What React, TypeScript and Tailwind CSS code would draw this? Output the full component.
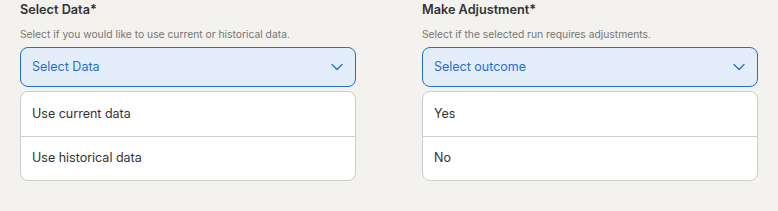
import React from "react";

function Chevron() {
  return (
    <svg width="14" height="14" viewBox="0 0 14 14" fill="none">
      <path d="M2 4.5 L7 9.5 L12 4.5" stroke="#1f6fd1" strokeWidth="1.3" strokeLinecap="round" strokeLinejoin="round" />
    </svg>
  );
}

function Field({ title, sub, placeholder, options }: { title: string; sub: string; placeholder: string; options: string[] }) {
  return (
    <div className="flex w-[336px] flex-col">
      <div className="text-[12.7px] font-semibold leading-[18px] text-[#333333]">{title}</div>
      <div className="mt-[7px] text-[10.3px] leading-[16px] text-[#767676]">{sub}</div>
      <div className="mt-[5px] flex h-[40px] items-center justify-between rounded-[8px] border border-[#1f6fd1] bg-[#e3eefa] pl-[11px] pr-[11px]">
        <span className="text-[12.5px] text-[#1f6fd1]">{placeholder}</span>
        <Chevron />
      </div>
      <div className="mt-[4px] flex flex-col rounded-[8px] border border-[#cfcfcf] bg-white">
        {options.map((o, i) => (
          <div
            key={o}
            className={
              "flex h-[44px] items-center pl-[11px] text-[12.5px] text-[#333333] " +
              (i > 0 ? "border-t border-[#cfcfcf]" : "")
            }
          >
            {o}
          </div>
        ))}
      </div>
    </div>
  );
}

export default function App() {
  return (
    <div
      className="flex h-[211px] w-[778px] gap-[66px] bg-[#f3f2ee] pl-[20px] pt-[1px]"
      style={{ fontFamily: 'Inter, sans-serif' }}
    >
      <Field
        title="Select Data*"
        sub="Select if you would like to use current or historical data."
        placeholder="Select Data"
        options={["Use current data", "Use historical data"]}
      />
      <Field
        title="Make Adjustment*"
        sub="Select if the selected run requires adjustments."
        placeholder="Select outcome"
        options={["Yes", "No"]}
      />
    </div>
  );
}
